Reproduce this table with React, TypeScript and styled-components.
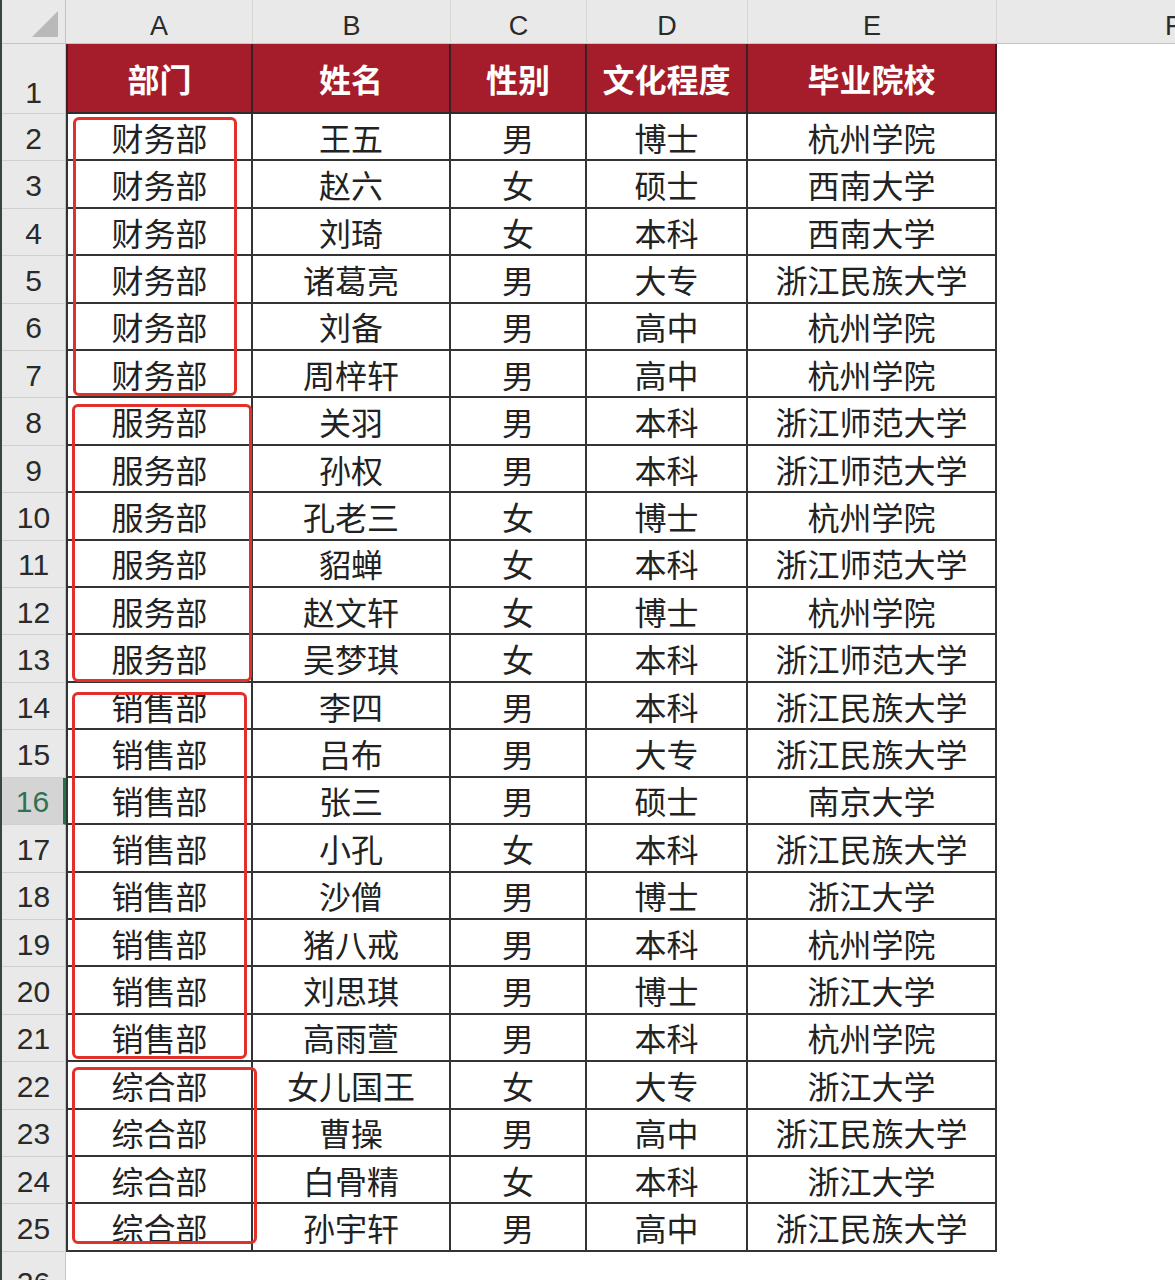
import React from "react";
import styled, { createGlobalStyle, css } from "styled-components";

const Global = createGlobalStyle`
  html, body { margin: 0; padding: 0; background: #ffffff; }
  body { overflow: hidden; }
`;

const CJK = `"Noto Sans CJK SC", "Noto Sans", sans-serif`;
const LATIN = `"Liberation Sans", "Noto Sans", Arial, sans-serif`;

type Pos = { $r: number; $c: number };
const place = css<Pos>`
  grid-row: ${(p) => p.$r};
  grid-column: ${(p) => p.$c};
`;

const Frame = styled.div`
  width: 1175px;
  height: 1280px;
  overflow: hidden;
  border-left: 2px solid #34463d;
  box-sizing: border-box;
  background: #ffffff;
`;

const Sheet = styled.div`
  display: grid;
  grid-template-columns: 64px 187px 198px 136px 161px 249px 360px;
  grid-template-rows: 44px 70px repeat(24, 47.42px) 60px;
`;

const Corner = styled.div<Pos>`
  ${place};
  background: #e9e9e9;
  border-right: 1px solid #c4c4c4;
  border-bottom: 1px solid #c4c4c4;
  box-sizing: border-box;
  display: flex;
  align-items: flex-end;
  justify-content: flex-end;
  padding: 0 7px 6px 0;
`;

const ColHead = styled.div<Pos & { $edge?: boolean }>`
  ${place};
  background: #e9e9e9;
  border-right: 1px solid #d6d6d6;
  border-bottom: 1px solid #c4c4c4;
  box-sizing: border-box;
  display: flex;
  align-items: center;
  justify-content: ${(p) => (p.$edge ? "flex-start" : "center")};
  padding-left: ${(p) => (p.$edge ? "168px" : "0")};
  font-family: ${LATIN};
  font-size: 27px;
  color: #2b2b2b;
  padding-top: 10px;
  overflow: hidden;
`;

const RowHead = styled.div<Pos & { $active?: boolean; $bottom?: boolean }>`
  ${place};
  background: ${(p) => (p.$active ? "#d4d4d4" : "#e9e9e9")};
  border-bottom: 1px solid #d0d0d0;
  border-right: ${(p) => (p.$active ? "3px solid #217346" : "1px solid #c4c4c4")};
  box-sizing: border-box;
  display: flex;
  justify-content: center;
  align-items: ${(p) => (p.$bottom ? "flex-end" : "center")};
  padding-bottom: ${(p) => (p.$bottom ? "3px" : "0")};
  padding-top: ${(p) => (p.$bottom ? "0" : "3px")};
  font-family: ${LATIN};
  font-size: 30px;
  color: ${(p) => (p.$active ? "#2f7252" : "#2a2a2a")};
`;

const HeadCell = styled.div<Pos & { $first?: boolean }>`
  ${place};
  background: #a51d2a;
  color: #ffffff;
  font-family: ${CJK};
  font-weight: 700;
  font-size: 32px;
  display: flex;
  align-items: center;
  justify-content: center;
  box-sizing: border-box;
  border-right: 2px solid #3a2024;
  border-bottom: 2px solid #2d2d2d;
  ${(p) =>
    p.$first &&
    css`
      border-left: 2px solid #3a2024;
    `}
`;

const Cell = styled.div<Pos & { $first?: boolean }>`
  ${place};
  background: #ffffff;
  color: #222222;
  font-family: ${CJK};
  font-size: 32px;
  display: flex;
  align-items: center;
  justify-content: center;
  box-sizing: border-box;
  border-right: 2px solid #333333;
  border-bottom: 2px solid #333333;
  white-space: nowrap;
  ${(p) =>
    p.$first &&
    css`
      border-left: 2px solid #333333;
    `}
`;

const Mark = styled.div<{ $rows: string; $m: string }>`
  grid-column: 2;
  grid-row: ${(p) => p.$rows};
  margin: ${(p) => p.$m};
  border: 3.5px solid #e2302a;
  border-radius: 6px;
  box-sizing: border-box;
  z-index: 2;
  pointer-events: none;
`;

const Triangle = () => (
  <svg width="26" height="26" viewBox="0 0 26 26">
    <polygon points="26,0 26,26 0,26" fill="#b9b9b9" />
  </svg>
);

const rows: string[][] = [
  ["财务部", "王五", "男", "博士", "杭州学院"],
  ["财务部", "赵六", "女", "硕士", "西南大学"],
  ["财务部", "刘琦", "女", "本科", "西南大学"],
  ["财务部", "诸葛亮", "男", "大专", "浙江民族大学"],
  ["财务部", "刘备", "男", "高中", "杭州学院"],
  ["财务部", "周梓轩", "男", "高中", "杭州学院"],
  ["服务部", "关羽", "男", "本科", "浙江师范大学"],
  ["服务部", "孙权", "男", "本科", "浙江师范大学"],
  ["服务部", "孔老三", "女", "博士", "杭州学院"],
  ["服务部", "貂蝉", "女", "本科", "浙江师范大学"],
  ["服务部", "赵文轩", "女", "博士", "杭州学院"],
  ["服务部", "吴梦琪", "女", "本科", "浙江师范大学"],
  ["销售部", "李四", "男", "本科", "浙江民族大学"],
  ["销售部", "吕布", "男", "大专", "浙江民族大学"],
  ["销售部", "张三", "男", "硕士", "南京大学"],
  ["销售部", "小孔", "女", "本科", "浙江民族大学"],
  ["销售部", "沙僧", "男", "博士", "浙江大学"],
  ["销售部", "猪八戒", "男", "本科", "杭州学院"],
  ["销售部", "刘思琪", "男", "博士", "浙江大学"],
  ["销售部", "高雨萱", "男", "本科", "杭州学院"],
  ["综合部", "女儿国王", "女", "大专", "浙江大学"],
  ["综合部", "曹操", "男", "高中", "浙江民族大学"],
  ["综合部", "白骨精", "女", "本科", "浙江大学"],
  ["综合部", "孙宇轩", "男", "高中", "浙江民族大学"],
];

const headers = ["部门", "姓名", "性别", "文化程度", "毕业院校"];
const letters = ["A", "B", "C", "D", "E"];

const marks = [
  { rows: "3 / 9", m: "3px 16px 2px 7px" },
  { rows: "9 / 15", m: "6px 1px 1px 6px" },
  { rows: "15 / 23", m: "9px 6px 3px 6px" },
  { rows: "23 / 27", m: "5px -4px 8px 6px" },
];

export default function App() {
  return (
    <>
      <Global />
      <Frame>
        <Sheet>
          <Corner $r={1} $c={1}>
            <Triangle />
          </Corner>
          {letters.map((l, i) => (
            <ColHead key={l} $r={1} $c={i + 2}>
              {l}
            </ColHead>
          ))}
          <ColHead $r={1} $c={7} $edge>
            F
          </ColHead>

          <RowHead $r={2} $c={1} $bottom>
            1
          </RowHead>
          {headers.map((h, i) => (
            <HeadCell key={h} $r={2} $c={i + 2} $first={i === 0}>
              {h}
            </HeadCell>
          ))}

          {rows.map((r, ri) => (
            <React.Fragment key={ri}>
              <RowHead $r={ri + 3} $c={1} $active={ri + 2 === 16}>
                {ri + 2}
              </RowHead>
              {r.map((v, ci) => (
                <Cell key={ci} $r={ri + 3} $c={ci + 2} $first={ci === 0}>
                  {v}
                </Cell>
              ))}
            </React.Fragment>
          ))}

          <RowHead $r={27} $c={1}>
            26
          </RowHead>

          {marks.map((mk, i) => (
            <Mark key={i} $rows={mk.rows} $m={mk.m} />
          ))}
        </Sheet>
      </Frame>
    </>
  );
}
